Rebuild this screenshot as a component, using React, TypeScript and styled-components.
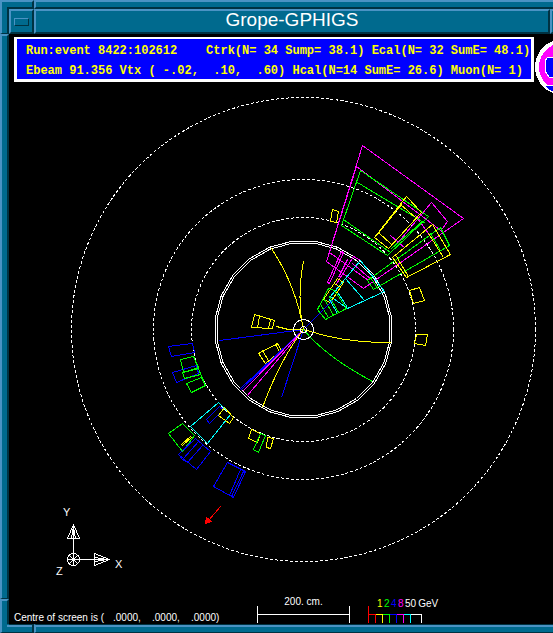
import React from "react";
import styled, { createGlobalStyle } from "styled-components";

const light = "#4a93c4";
const teal = "#006a8e";
const dark = "#003242";

const Y = "#ffff00";
const G = "#00ff00";
const B = "#0000ff";
const M = "#ff00ff";
const C = "#00ffff";
const W = "#ffffff";
const R = "#ff0000";

const GlobalStyle = createGlobalStyle`
  *, *::before, *::after { box-sizing: border-box; }
  body { margin: 0; background: #000; }
`;

const Window = styled.div`
  display: flex;
  flex-direction: column;
  min-height: 100vh;
  overflow: hidden;
  background: #000;
`;

const EdgeRow = styled.div`
  display: flex;
  flex: none;
  height: 9px;
`;

const Corner = styled.div<{ $bottom?: boolean }>`
  width: 9px;
  flex: none;
  border-left: 2px solid ${light};
  ${(p) =>
    p.$bottom
      ? `border-bottom: 1px solid ${dark};
         background: linear-gradient(${light}, ${light}) right 0 top 1px / 2px 2px no-repeat, ${teal};`
      : `border-top: 2px solid ${light};
         background: linear-gradient(${dark}, ${dark}) right bottom / 2px 2px no-repeat, ${teal};`}
`;

const EdgeX = styled.div<{ $bottom?: boolean; $short?: boolean }>`
  flex: ${(p) => (p.$short ? "0 0 25px" : "1")};
  background: ${teal};
  ${(p) =>
    p.$bottom
      ? `border-top: 1px solid ${dark}; border-bottom: 1px solid ${dark}; box-shadow: inset 0 2px ${light};`
      : `border-top: 2px solid ${light}; border-bottom: 2px solid ${dark};`}
  ${(p) =>
    p.$short
      ? `border-right: 2px solid ${dark};`
      : `border-left: 2px solid ${light};`}
`;

const Middle = styled.div`
  display: flex;
  flex: 1;
`;

const SideEdge = styled.div`
  display: flex;
  flex-direction: column;
  flex: 0 0 9px;
`;

const EdgeY = styled.div<{ $short?: boolean }>`
  flex: ${(p) => (p.$short ? "0 0 25px" : "1")};
  background: ${teal};
  border-left: 2px solid ${light};
  border-right: 2px solid ${dark};
  border-bottom: 1px solid ${dark};
  & + & {
    border-top: 2px solid ${light};
  }
  &:last-child {
    border-bottom: 0;
  }
`;

const Content = styled.div`
  flex: 1;
  min-width: 0;
  display: flex;
  flex-direction: column;
`;

const TitleBar = styled.header`
  display: flex;
  flex: none;
  height: 25px;
`;

const TitleButton = styled.button`
  flex: 0 0 25px;
  padding: 0;
  display: flex;
  align-items: center;
  justify-content: center;
  background: ${teal};
  border: 2px solid;
  border-color: ${light} ${dark} ${dark} ${light};
  &:last-child {
    margin-right: -22px;
  }
`;

const MenuMark = styled.span`
  width: 15px;
  height: 8px;
  border: 1px solid;
  border-color: ${light} ${dark} ${dark} ${light};
`;

const Title = styled.h1`
  flex: 1;
  margin: 0;
  background: ${teal};
  border: 2px solid;
  border-color: ${light} ${dark} ${dark} ${light};
  color: #fff;
  font: 400 19px/17px "Liberation Sans", Arial, sans-serif;
  text-align: center;
`;

const BannerRow = styled.div`
  display: flex;
  height: 62px;
  padding: 3px 0 0 5px;
  gap: 1px;
`;

const Banner = styled.div`
  flex: none;
  height: 45px;
  padding: 2px 0 0 9px;
  width: 520px;
  background: ${B};
  border: 3px solid #fff;
  border-top-width: 2px;
`;

const BannerLine = styled.p`
  margin: 0;
  color: ${Y};
  font: 700 12px/20px "Liberation Mono", "Courier New", monospace;
  white-space: pre;
`;

const Logo = styled.svg`
  flex: none;
  width: 56px;
  height: 58px;
  margin-top: 2px;
`;

const Plot = styled.svg`
  display: block;
  width: 100%;
  height: auto;
  shape-rendering: crispEdges;
  fill: none;
  stroke-width: 1;
`;

const AxisLabel = styled.text`
  fill: #fff;
  font: 11px "Liberation Sans", sans-serif;
`;

const Footer = styled.footer`
  display: grid;
  grid-template-columns: 243px 93px 1fr;
  height: 28px;
  padding-left: 5px;
  color: #fff;
  font: 10px/12px "Liberation Sans", sans-serif;
`;

const Status = styled.div`
  display: flex;
  align-self: end;
  white-space: pre;
`;

const StatusLabel = styled.span`
  width: 99px;
`;

const StatusValue = styled.span`
  width: 39px;
`;

const Scale = styled.div`
  text-align: center;
`;

const ScaleBar = styled.div`
  height: 17px;
  margin-top: -2px;
  border: solid #fff;
  border-width: 0 1px;
  background: linear-gradient(#fff, #fff) 0 8px / 100% 1px no-repeat;
`;

const Legend = styled.div`
  margin-left: 18px;
  padding-top: 2px;
`;

const LegendLabels = styled.div`
  display: flex;
  padding-left: 9px;
  height: 12px;
`;

const LegendLabel = styled.span<{ $color: string }>`
  min-width: 7px;
  color: ${(p) => p.$color};
  &:last-child {
    margin-left: 2px;
  }
`;

const LegendTicks = styled.div`
  display: flex;
  align-items: end;
  height: 13px;
`;

const Tick = styled.span<{ $color: string; $wide?: boolean }>`
  width: ${(p) => (p.$wide ? 11 : 7)}px;
  height: 9px;
  border: solid ${(p) => p.$color};
  border-width: 1px 1px 0 0;
`;

const TickStart = styled.span`
  width: 1px;
  height: 17px;
  background: ${R};
`;

const ring = (r: number) =>
  Array.from({ length: 24 }, (_, i) => {
    const a = ((i + 0.5) * Math.PI) / 12;
    return `${(303 + r * Math.sin(a)).toFixed(1)},${(329 - r * Math.cos(a)).toFixed(1)}`;
  }).join(" ");

const shapes: [string, string][] = [
  // barrel and endcap towers, upper right
  [M, "M362 145L463 218L363 288L326 261ZM356 166L443 232M356 166L327 258M329 252L368 280"],
  [M, "M431 202L447 221L440 231M431 202L395 245M415 215L430 236M390 235L405 248"],
  [M, "M341 251L343 252L329 283L327 282ZM353 256L335 285M353 256L360 260M352 263L372 280M347 259L338 277"],
  [G, "M360 170L428 216L387 255L341 225ZM357 182L425 223M343 219L390 252"],
  [G, "M367 280L440 227L449 245L373 289ZM370 277L378 289M430 233L440 250M423 220L391 248"],
  [Y, "M406 196L421 212L388 248L374 237ZM400 204L415 217M378 232L391 244M401 204L376 235"],
  [Y, "M432 224L450 254L406 277L392 257ZM428 233L443 257M396 256L408 276"],
  [Y, "M409 290L419 287L424 300L413 303Z"],
  [Y, "M416 334L427 334L425 345L414 343Z"],
  [Y, "M332 209L338 211L336 222L330 221Z"],
  [C, "M360 260L384 291L347 308L330 296ZM345 278L364 300M336 290L347 307M329 299L337 313"],
  [Y, "M337 278L343 282L330 302L323 299ZM334 283L340 287"],
  [G, "M328 288L317 309L325 319L346 308L334 290ZM324 299L333 315M329 296L338 312M320 304L328 317"],
  // clusters on the left
  [B, "M168 346L192 343L194 352L171 356Z"],
  [B, "M172 372L196 365L198 373L176 382Z"],
  [G, "M180 359L193 356L198 367L183 372ZM182 372L198 368L200 374L184 378Z"],
  [G, "M186 383L201 377L205 385L191 392ZM193 356L205 385"],
  [C, "M218 402L230 414L207 443L190 426Z"],
  [B, "M219 406L223 409L209 423L206 419Z"],
  [Y, "M224 407L233 417L229 423L218 415Z"],
  [G, "M182 423L194 435L182 451L168 433Z"],
  [Y, "M182 445L192 436M181 444L191 435"],
  [B, "M195 438L210 451L196 469L178 454ZM202 445L187 462M198 441L183 458M180 457L186 462"],
  [B, "M227 462L245 471L233 497L213 486ZM240 469L229 495M243 471L231 496"],
  [Y, "M251 429L260 433L257 442L248 438Z"],
  [G, "M260 433L265 435L258 452L253 449Z"],
  [Y, "M267 437L273 438L270 448L266 447Z"],
  // inner calorimeter cells
  [Y, "M254 314L274 320L272 328L251 327ZM259 316L257 327M270 319L268 328"],
  [Y, "M258 353L277 343L281 350L265 363ZM262 350L268 360M275 344L279 351"],
  // tracks
  [B, "M219 340L303 329L281 397M303 329L332 300M303 329L240 388M303 329L240 390"],
  [M, "M303 329L242 391M303 329L246 396"],
  [Y, "M303 329Q280 358 262 407M303 329Q295 284 271 248M303 329Q296 298 303 261"],
  [Y, "M276 326L288 329L303 329Q345 343 391 342"],
  [G, "M303 329Q325 356 372 381"],
];

const ticks: [string, boolean?][] = [[R], [Y], [G], [B], [M], [C], [W, true]];
const labels: [string, string][] = [
  ["1", Y],
  ["2", G],
  ["4", B],
  ["8", M],
  ["50", W],
  ["GeV", W],
];

export default function App() {
  return (
    <>
      <GlobalStyle />
      <Window>
        <EdgeRow>
          <Corner />
          <EdgeX $short />
          <EdgeX />
        </EdgeRow>
        <Middle>
          <SideEdge>
            <EdgeY $short />
            <EdgeY />
            <EdgeY $short />
          </SideEdge>
          <Content>
            <TitleBar>
              <TitleButton aria-label="Window menu">
                <MenuMark />
              </TitleButton>
              <Title>Grope-GPHIGS</Title>
              <TitleButton aria-label="Minimize" />
            </TitleBar>
            <BannerRow>
              <Banner>
                <BannerLine>{"Run:event 8422:102612    Ctrk(N= 34 Sump= 38.1) Ecal(N= 32 SumE= 48.1)"}</BannerLine>
                <BannerLine>{"Ebeam 91.356 Vtx ( -.02,  .10,  .60) Hcal(N=14 SumE= 26.6) Muon(N= 1)"}</BannerLine>
              </Banner>
              <Logo viewBox="0 0 56 58" shapeRendering="crispEdges" aria-hidden="true">
                <circle cx="28" cy="28" r="28" fill={W} />
                <circle cx="28" cy="28" r="24" fill={M} />
                <path d="M9 46H47A24 24 0 0 1 9 46Z" fill={B} stroke={W} />
                <path d="M22 18H13L10 22V32L14 38H22Z" fill={B} stroke={W} />
              </Logo>
            </BannerRow>
            <Plot viewBox="9 96 544 500" role="img" aria-label="Event display">
              <g transform="translate(.5 .5)">
                <g stroke={W} strokeDasharray="3 2">
                  <circle cx="303" cy="329" r="232" />
                  <circle cx="303" cy="329" r="150" />
                  <circle cx="303" cy="329" r="112" />
                </g>
                <polygon points={ring(89)} stroke={W} />
                <polygon points={ring(87)} stroke={W} />
                {shapes.map(([color, d], i) => (
                  <path key={i} d={d} stroke={color} />
                ))}
                <circle cx="303" cy="329" r="10" stroke={W} />
                <circle cx="303" cy="329" r="3" stroke={W} />
                <path d="M220 506L208 520" stroke={R} />
                <path d="M205 523L206 517L211 521Z" stroke={R} fill={R} />
                <g stroke={W}>
                  <path d="M73 565V524L67 538H79L73 524M71 538L73 526L75 538" />
                  <path d="M67 559H109L94 553V565L109 559M94 557L107 559L94 561" />
                  <circle cx="73" cy="559" r="6" />
                  <path d="M69 555L77 563M77 555L69 563" />
                </g>
              </g>
              <AxisLabel x="63" y="516">Y</AxisLabel>
              <AxisLabel x="115" y="568">X</AxisLabel>
              <AxisLabel x="56" y="575">Z</AxisLabel>
            </Plot>
            <Footer>
              <Status>
                <StatusLabel>Centre of screen is (</StatusLabel>
                <StatusValue>.0000,</StatusValue>
                <StatusValue>.0000,</StatusValue>
                <StatusValue>.0000)</StatusValue>
              </Status>
              <Scale>
                200. cm.
                <ScaleBar />
              </Scale>
              <Legend>
                <LegendLabels>
                  {labels.map(([text, color]) => (
                    <LegendLabel key={text} $color={color}>
                      {text}
                    </LegendLabel>
                  ))}
                </LegendLabels>
                <LegendTicks>
                  <TickStart />
                  {ticks.map(([color, wide]) => (
                    <Tick key={color} $color={color} $wide={wide} />
                  ))}
                </LegendTicks>
              </Legend>
            </Footer>
          </Content>
        </Middle>
        <EdgeRow>
          <Corner $bottom />
          <EdgeX $bottom $short />
          <EdgeX $bottom />
        </EdgeRow>
      </Window>
    </>
  );
}
